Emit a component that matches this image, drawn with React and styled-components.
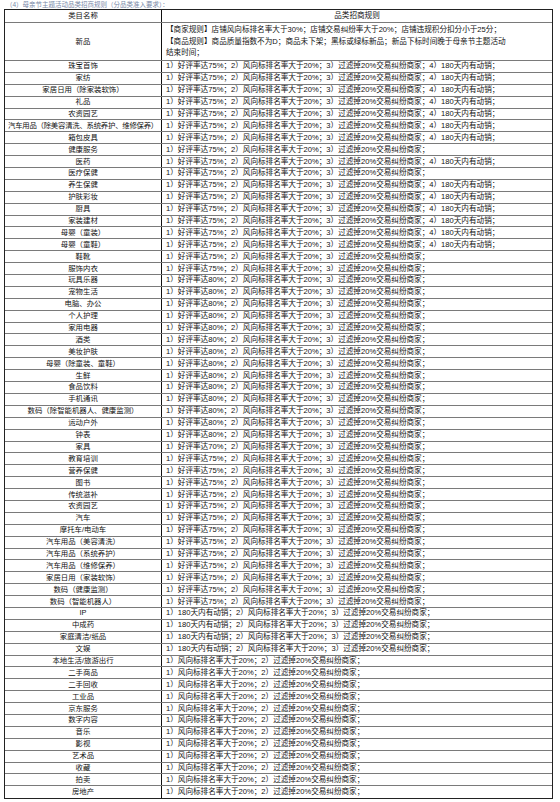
import styled, { createGlobalStyle } from 'styled-components';

const Global = createGlobalStyle`
  html, body { margin: 0; padding: 0; background: #fff; }
  body { font-family: "Liberation Sans", "Noto Sans CJK SC", sans-serif; color: #111; }
`;

const Page = styled.div`
  width: 560px;
  padding: 0 7px 0 4px;
  box-sizing: border-box;
`;

const Caption = styled.div`
  height: 9px;
  display: flex;
  align-items: center;
  font-size: 6.5px;
  line-height: 8px;
  color: #7a8aa8;
  padding-left: 2px;
  white-space: nowrap;
`;

const Table = styled.div`
  border: 1px solid #222;
`;

const Row = styled.div`
  display: grid;
  grid-template-columns: 157px 1fr;
  height: ${(p) => p.$h || 11.9}px;
  box-sizing: border-box;
  border-bottom: ${(p) => (p.$last ? 'none' : '1px solid #7a7a7a')};
`;

const NameCell = styled.div`
  display: flex;
  align-items: center;
  justify-content: center;
  border-right: 1px solid #111;
  font-size: 7.4px;
  line-height: 10px;
  white-space: nowrap;
  letter-spacing: ${(p) => (p.$tight ? '-0.25px' : '0')};
`;

const RuleCell = styled.div`
  display: flex;
  align-items: center;
  justify-content: ${(p) => (p.$center ? 'center' : 'flex-start')};
  padding: 0 4px;
  font-size: 7.6px;
  line-height: ${(p) => (p.$multi ? '11.6px' : '10px')};
  white-space: nowrap;
  overflow: hidden;
`;

const R4 = (r) => `1）好评率达${r}%；2）风向标排名率大于20%；3）过滤掉20%交易纠纷商家；4）180天内有动销；`;
const R3 = (r) => `1）好评率达${r}%；2）风向标排名率大于20%；3）过滤掉20%交易纠纷商家；`;
const RIP = '1）180天内有动销；2）风向标排名率大于20%；3）过滤掉20%交易纠纷商家；';
const R2 = '1）风向标排名率大于20%；2）过滤掉20%交易纠纷商家；';

const rows = [
  ['珠宝首饰', R4(75)],
  ['家纺', R4(75)],
  ['家居日用（除家装软饰）', R4(75)],
  ['礼品', R4(75)],
  ['农资园艺', R4(75)],
  ['汽车用品（除美容清洗、系统养护、维修保养）', R4(75)],
  ['箱包皮具', R4(75)],
  ['健康服务', R3(75)],
  ['医药', R4(75)],
  ['医疗保健', R3(75)],
  ['养生保健', R4(75)],
  ['护肤彩妆', R4(75)],
  ['厨具', R4(75)],
  ['家装建材', R4(75)],
  ['母婴（童装）', R4(75)],
  ['母婴（童鞋）', R4(75)],
  ['鞋靴', R3(75)],
  ['服饰内衣', R3(75)],
  ['玩具乐器', R3(80)],
  ['宠物生活', R3(80)],
  ['电脑、办公', R3(80)],
  ['个人护理', R3(80)],
  ['家用电器', R3(80)],
  ['酒类', R3(80)],
  ['美妆护肤', R3(80)],
  ['母婴（除童装、童鞋）', R3(80)],
  ['生鲜', R3(80)],
  ['食品饮料', R3(80)],
  ['手机通讯', R3(80)],
  ['数码（除智能机器人、健康监测）', R3(80)],
  ['运动户外', R3(80)],
  ['钟表', R3(80)],
  ['家具', R3(70)],
  ['教育培训', R3(75)],
  ['营养保健', R3(75)],
  ['图书', R3(75)],
  ['传统滋补', R3(75)],
  ['农资园艺', R3(75)],
  ['汽车', R3(75)],
  ['摩托车/电动车', R3(75)],
  ['汽车用品（美容清洗）', R3(75)],
  ['汽车用品（系统养护）', R3(75)],
  ['汽车用品（维修保养）', R3(75)],
  ['家居日用（家装软饰）', R3(75)],
  ['数码（健康监测）', R3(75)],
  ['数码（智能机器人）', R3(75)],
  ['IP', RIP],
  ['中成药', RIP],
  ['家庭清洁/纸品', RIP],
  ['文娱', RIP],
  ['本地生活/旅游出行', R2],
  ['二手商品', R2],
  ['二手回收', R2],
  ['工业品', R2],
  ['京东服务', R2],
  ['数字内容', R2],
  ['音乐', R2],
  ['影视', R2],
  ['艺术品', R2],
  ['收藏', R2],
  ['拍卖', R2],
  ['房地产', R2],
];

export default function App() {
  return (
    <>
      <Global />
      <Page>
        <Caption>（4）母亲节主题活动品类招商规则（分品类准入要求）：</Caption>
        <Table>
          <Row $h={13}>
            <NameCell>类目名称</NameCell>
            <RuleCell $center>品类招商规则</RuleCell>
          </Row>
          <Row $h={38}>
            <NameCell>新品</NameCell>
            <RuleCell $multi>
              <div>
                【商家规则】店铺风向标排名率大于30%；店铺交易纠纷率大于20%；店铺违规积分扣分小于25分；
                <br />
                【商品规则】商品质量指数不为D；商品未下架；黑标或绿标新品；新品下标时间晚于母亲节主题活动
                <br />
                结束时间；
              </div>
            </RuleCell>
          </Row>
          {rows.map(([name, rule], i) => (
            <Row key={name + i} $last={i === rows.length - 1}>
              <NameCell $tight={name.length > 16}>{name}</NameCell>
              <RuleCell>{rule}</RuleCell>
            </Row>
          ))}
        </Table>
      </Page>
    </>
  );
}
